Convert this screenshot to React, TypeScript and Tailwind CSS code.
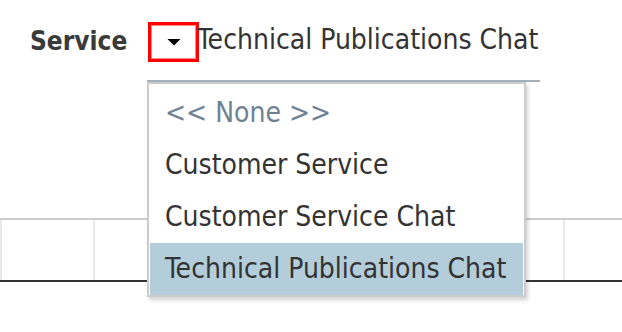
import React from "react";

const font = { fontFamily: '"DejaVu Sans", sans-serif', fontStretch: "condensed" } as React.CSSProperties;

export default function App() {
  const items = ["Customer Service", "Customer Service Chat"];
  return (
    <div className="relative w-[622px] h-[332px] bg-white overflow-hidden text-[#333333]" style={font}>
      <div className="flex items-start h-[82px]">
        <div className="pl-[30px] pt-[26px] w-[147px] font-bold text-[26px] leading-[30px] text-[#3a3a3a]">Service</div>
        <div className="flex items-start w-[393px] h-[82px] border-b-2 border-[#a3b1bc]">
          <div className="mt-[22px] ml-[1px] w-[51px] h-[40px] border-[3px] border-[#ff0000] shadow-[inset_0_0_0_1px_#ff8a8a] flex items-center justify-center">
            <svg width="14" height="8" viewBox="0 0 14 8"><polygon points="0.5,1 13.5,1 7,7.5" fill="#000" /></svg>
          </div>
          <div className="pt-[25px] text-[28px] leading-[30px] text-[#333333] -ml-[2px]">Technical Publications Chat</div>
        </div>
      </div>
      <div className="mt-[136px] flex h-[64px] border-t-2 border-[#cccccc] border-b-2 border-b-[#333333]">
        <div className="w-[2px] bg-[#e8e8e8]" />
        <div className="w-[91px]" />
        <div className="w-[2px] bg-[#e8e8e8]" />
        <div className="flex-1" />
        <div className="w-[2px] bg-[#e8e8e8]" />
        <div className="w-[57px]" />
      </div>
      <div className="absolute left-[147px] top-[82px] w-[379px] h-[215px] bg-white border-2 border-[#cccccc] shadow-[2px_3px_4px_rgba(0,0,0,0.18)] pt-[3px] px-[1px]">
        <div className="h-[52px] flex items-center pl-[15px] text-[28px] text-[#6f8294]">&lt;&lt; None &gt;&gt;</div>
        {items.map((t) => (
          <div key={t} className="h-[52px] flex items-center pl-[15px] text-[28px] text-[#333333]">{t}</div>
        ))}
        <div className="h-[52px] flex items-center pl-[15px] text-[28px] text-[#333333] bg-[#b3cddb]">Technical Publications Chat</div>
      </div>
    </div>
  );
}
